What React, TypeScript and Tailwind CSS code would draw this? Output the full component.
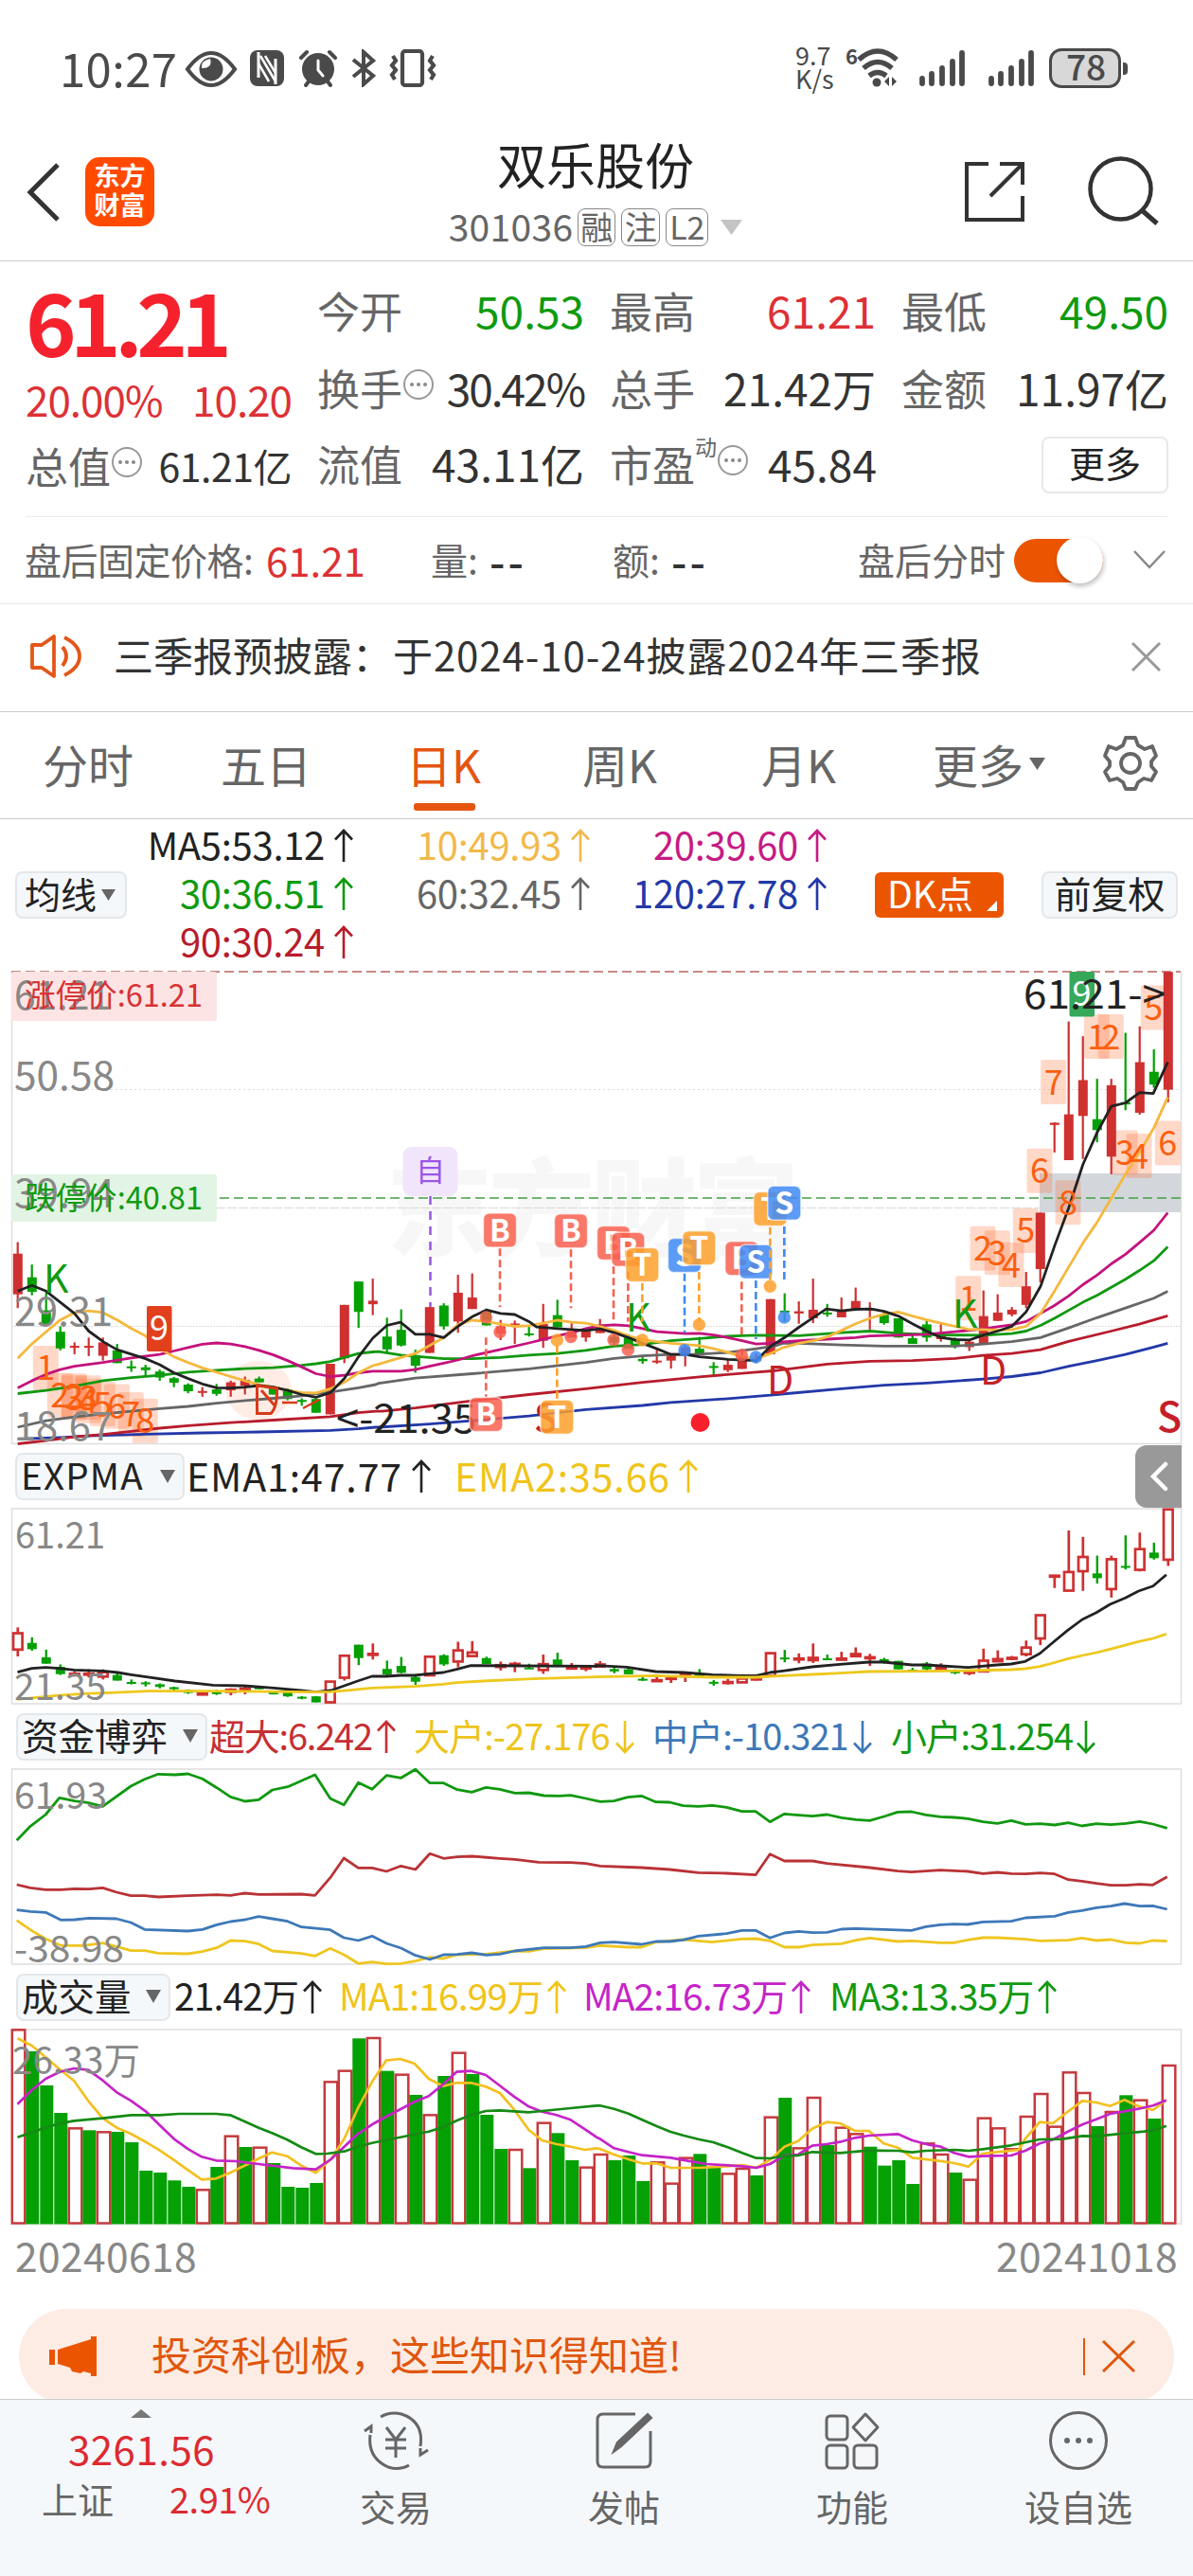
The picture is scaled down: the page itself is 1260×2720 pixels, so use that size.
import React from 'react';

type Pt = [number, number];
type Conv = (p: Pt) => Pt;

const RED = '#cf3030';
const GREEN = '#04a004';

const barX = (i: number) => 18.8 + 15 * i;
const priceY = (v: number) => 1010 + v / 2.958;

const segment = (ox: number, sx: number, oy: number, sy: number): Conv => ([x, y]) => [ox + x / sx, oy + y / sy];
const mainA = segment(0, 3, 1010, 2.958);
const mainB = segment(400, 3, 1010, 2.958);
const mainC = segment(820, 3, 1010, 2.958);
const emaA = segment(0, 2.489, 1520, 3);
const emaB = segment(630, 2.489, 1520, 3);
const fund = segment(0, 1.2444, 1800, 3);
const volA = segment(0, 2.489, 2080, 3);
const volB = segment(630, 2.489, 2080, 3);

const parse = (s: string): Pt[] => s.trim().split(' ').map((p) => p.split(',').map(Number) as Pt);
const join = (parts: [Conv, string][]) =>
  parts.flatMap(([c, s]) => parse(s).map(c)).map(([x, y]) => `${x.toFixed(1)},${y.toFixed(1)}`).join(' ');

const maLines: { color: string; pts: string }[] = [
  {
    color: '#2338a8',
    pts: join([
      [mainA, '56,1507 190,1502 281,1497 461,1492 641,1488 821,1485 1047,1480 1136,1475 1190,1470'],
      [mainB, '0,1470 161,1460 296,1450 476,1435 656,1415 836,1402 926,1393 1106,1381 1241,1370'],
      [mainC, '0,1368 206,1350 341,1339 476,1332 656,1320 746,1312 837,1300 926,1280 1016,1262 1106,1243 1196,1220 1240,1208'],
    ]),
  },
  {
    color: '#b81c2c',
    pts: join([
      [mainA, '56,1522 146,1512 236,1500 326,1493 416,1483 506,1473 596,1465 731,1456 866,1448 1047,1437 1136,1425 1190,1420'],
      [mainB, '10,1420 116,1410 296,1388 476,1368 656,1350 836,1330 1016,1313 1196,1298 1250,1294'],
      [mainC, '0,1293 161,1273 296,1264 431,1262 566,1255 656,1246 746,1240 837,1228 926,1202 1061,1170 1150,1148 1240,1122'],
    ]),
  },
  {
    color: '#666666',
    pts: join([
      [mainA, '56,1470 146,1450 236,1438 326,1428 416,1420 506,1412 596,1405 686,1395 776,1387 866,1380 956,1372 1047,1360 1136,1347 1190,1337'],
      [mainB, '0,1333 116,1317 296,1303 476,1288 656,1268 746,1255 836,1247 926,1243 1016,1242 1106,1237 1196,1225 1260,1215'],
      [mainC, '20,1208 71,1208 206,1213 341,1217 566,1217 656,1210 746,1203 837,1190 926,1160 1016,1128 1106,1098 1196,1067 1240,1046'],
    ]),
  },
  {
    color: '#109810',
    pts: join([
      [mainA, '56,1365 146,1355 236,1342 326,1325 416,1315 506,1308 596,1298 686,1292 776,1287 866,1284 956,1277 1001,1272 1047,1265 1091,1252 1136,1240 1181,1235'],
      [mainB, '0,1234 71,1245 161,1252 206,1256 296,1256 386,1252 476,1245 566,1240 656,1230 746,1217 836,1212 926,1200 1016,1193 1106,1186 1196,1183'],
      [mainC, '71,1184 206,1175 296,1170 386,1177 521,1182 656,1183 746,1178 791,1170 837,1152 881,1130 971,1080 1016,1058 1061,1033 1106,1008 1151,980 1196,950 1240,907'],
    ]),
  },
  {
    color: '#c4127c',
    pts: join([
      [mainA, '56,1347 101,1325 146,1305 191,1290 236,1280 326,1268 416,1254 506,1243 551,1232 596,1221 641,1211 686,1207 731,1210 776,1218 821,1230 866,1244 911,1262 956,1282 1001,1303 1047,1312 1091,1308 1136,1300 1181,1295'],
      [mainB, '0,1295 71,1295 116,1290 161,1280 206,1270 251,1260 296,1247 386,1227 476,1207 566,1185 611,1175 656,1162 701,1153 746,1150 791,1153 836,1162 881,1172 971,1178 1016,1177 1061,1182 1106,1190 1151,1200 1196,1210 1241,1208'],
      [mainC, '20,1204 71,1200 161,1195 251,1190 296,1185 386,1183 476,1180 566,1172 656,1163 701,1156 746,1150 791,1140 837,1115 881,1090 926,1060 971,1025 1016,995 1061,960 1106,930 1151,893 1196,855 1240,800'],
    ]),
  },
  {
    color: '#f5b83d',
    pts: join([
      [mainA, '56,1255 101,1210 146,1172 191,1135 236,1112 281,1107 326,1112 371,1135 416,1162 461,1185 506,1225 551,1250 596,1268 641,1285 686,1298 731,1312 776,1325 821,1338 866,1345 911,1355 956,1362 1001,1363 1047,1350 1091,1330 1136,1300 1181,1278'],
      [mainB, '0,1273 71,1252 116,1240 161,1215 206,1190 251,1150 296,1136 341,1140 386,1148 431,1155 476,1153 521,1145 566,1136 611,1142 656,1145 701,1155 746,1168 791,1185 836,1197 881,1203 926,1208 971,1212 1016,1215 1061,1225 1106,1236 1151,1250 1196,1257 1241,1240'],
      [mainC, '20,1222 71,1208 116,1200 161,1188 206,1168 251,1147 296,1130 341,1117 386,1110 431,1123 476,1135 521,1145 566,1155 611,1165 656,1165 701,1167 746,1165 791,1155 837,1115 881,1045 926,970 971,895 1016,830 1061,755 1106,680 1151,610 1196,535 1240,440'],
    ]),
  },
  {
    color: '#222222',
    pts: join([
      [mainA, '56,1045 101,1027 146,1045 191,1080 236,1115 281,1170 330,1205 371,1228 416,1242 461,1256 506,1275 551,1300 596,1318 641,1335 686,1347 731,1348 776,1345 821,1340 866,1345 911,1355 956,1368 1001,1377 1047,1362 1091,1318 1136,1250 1181,1192'],
      [mainB, '26,1152 69,1142 116,1180 161,1180 206,1190 251,1155 296,1125 341,1104 386,1115 431,1118 476,1140 500,1157 566,1162 656,1168 701,1163 746,1175 791,1190 836,1208 881,1225 926,1243 971,1243 1016,1250 1106,1258 1196,1262 1241,1218'],
      [mainC, '26,1190 71,1158 116,1128 158,1101 206,1107 251,1102 300,1101 341,1108 386,1123 431,1147 476,1170 521,1190 566,1196 611,1198 656,1182 701,1170 746,1155 791,1110 837,1030 881,905 926,785 971,650 1016,550 1061,468 1106,457 1151,425 1194,428 1240,330'],
    ]),
  },
];

// direction (1 up, 0 down), high, body top, body bottom, low
const candles: number[][] = [
  [1, 892, 928, 1055, 1098], [0, 962, 1002, 1047, 1058], [0, 1050, 1105, 1150, 1150], [0, 1155, 1172, 1224, 1230],
  [1, 1205, 1216, 1222, 1242], [1, 1190, 1216, 1222, 1248], [1, 1190, 1205, 1247, 1262], [0, 1210, 1230, 1270, 1270],
  [0, 1262, 1280, 1286, 1297], [0, 1275, 1283, 1292, 1312], [0, 1290, 1296, 1315, 1325], [0, 1313, 1317, 1331, 1345],
  [0, 1333, 1337, 1358, 1364], [1, 1345, 1357, 1362, 1375], [0, 1335, 1352, 1366, 1372], [1, 1325, 1330, 1355, 1375],
  [1, 1312, 1322, 1340, 1368], [0, 1312, 1318, 1330, 1330], [0, 1345, 1347, 1368, 1368], [0, 1349, 1352, 1382, 1386],
  [0, 1380, 1385, 1391, 1403], [0, 1380, 1382, 1425, 1425], [1, 1272, 1272, 1430, 1430], [1, 1088, 1088, 1255, 1270],
  [0, 1015, 1015, 1110, 1160], [1, 1006, 1075, 1086, 1120], [0, 1128, 1187, 1227, 1238], [0, 1102, 1166, 1215, 1218],
  [0, 1228, 1245, 1278, 1300], [1, 1095, 1095, 1238, 1238], [0, 1083, 1090, 1155, 1165], [1, 994, 1050, 1140, 1175],
  [1, 990, 1065, 1101, 1101], [0, 1100, 1110, 1152, 1152], [1, 1135, 1155, 1178, 1198], [1, 1137, 1146, 1151, 1210],
  [0, 1150, 1177, 1182, 1187], [1, 1085, 1148, 1200, 1222], [0, 1072, 1120, 1158, 1158], [1, 1145, 1170, 1190, 1190],
  [1, 1165, 1168, 1190, 1203], [1, 1132, 1150, 1176, 1176], [0, 1180, 1188, 1205, 1218], [0, 1180, 1190, 1225, 1225],
  [0, 1245, 1257, 1264, 1272], [1, 1228, 1262, 1268, 1272], [1, 1245, 1246, 1262, 1287], [1, 1215, 1220, 1245, 1280],
  [0, 1188, 1225, 1240, 1240], [0, 1267, 1279, 1284, 1307], [1, 1257, 1275, 1292, 1298], [1, 1225, 1250, 1288, 1288],
  [1, 1240, 1250, 1262, 1270], [1, 1070, 1070, 1242, 1242], [0, 1052, 1106, 1112, 1140], [1, 1077, 1108, 1115, 1147],
  [1, 1006, 1103, 1130, 1145], [0, 1085, 1112, 1118, 1125], [1, 1065, 1108, 1127, 1127], [1, 1034, 1076, 1102, 1102],
  [1, 1080, 1099, 1104, 1165], [0, 1108, 1118, 1145, 1150], [0, 1130, 1130, 1190, 1190], [0, 1180, 1192, 1210, 1210],
  [0, 1138, 1149, 1190, 1203], [1, 1147, 1175, 1195, 1203], [0, 1190, 1198, 1218, 1224], [1, 1200, 1203, 1220, 1232],
  [1, 1043, 1123, 1210, 1210], [1, 1055, 1112, 1138, 1138], [1, 1095, 1103, 1118, 1124], [1, 985, 1030, 1088, 1098],
  [1, 800, 800, 976, 1018], [1, 518, 519, 526, 612], [1, 203, 493, 636, 636], [1, 249, 386, 498, 632],
  [0, 382, 508, 542, 580], [1, 382, 402, 625, 680], [0, 238, 455, 462, 480], [1, 218, 330, 488, 494],
  [0, 290, 360, 400, 410], [1, 48, 48, 416, 455],
];

const volumes: [number, number][] = [
  [1, 190], [0, 258], [0, 366], [0, 453], [1, 502], [0, 508], [1, 514], [0, 513], [0, 546], [0, 636], [0, 642], [0, 667],
  [0, 687], [1, 697], [0, 624], [1, 527], [0, 561], [1, 563], [0, 612], [0, 687], [0, 690], [0, 675], [1, 355], [1, 320],
  [0, 217], [1, 216], [0, 320], [1, 332], [0, 396], [1, 460], [0, 336], [1, 263], [0, 330], [0, 459], [0, 567], [1, 570],
  [0, 628], [1, 485], [0, 517], [0, 603], [1, 626], [1, 585], [0, 603], [0, 588], [0, 669], [1, 610], [1, 677], [1, 596],
  [0, 583], [0, 626], [1, 646], [1, 630], [0, 651], [1, 467], [0, 405], [1, 565], [1, 405], [0, 555], [1, 500], [1, 520],
  [0, 560], [0, 620], [0, 603], [0, 678], [1, 550], [1, 585], [0, 642], [1, 665], [1, 470], [1, 502], [1, 568], [1, 465],
  [1, 393], [1, 497], [1, 325], [1, 390], [0, 495], [1, 450], [0, 397], [1, 413], [0, 471], [1, 303],
];

const emaLines = [
  {
    color: '#222222',
    pts: join([
      [emaA, '46,737 84,725 120,722 156,725 195,730 270,733 310,738 345,745 385,752 460,765 560,778 640,780 720,787 790,795 830,800 870,795 905,780 940,765 978,750 1015,750 1052,747 1090,747 1127,742 1165,738 1200,728 1238,716 1568,718'],
      [emaB, '0,716 80,721 155,735 230,738 305,745 380,748 420,748 456,738 490,733 567,720 640,712 716,705 755,705 830,714 865,714 978,722 1052,714 1090,711 1127,703 1165,678 1200,643 1238,605 1277,570 1314,548 1350,522 1390,502 1425,480 1463,464 1498,428'],
    ]),
  },
  {
    color: '#eec81e',
    pts: join([
      [emaA, '46,823 90,818 140,812 220,805 290,802 390,797 560,797 830,800 870,799 920,794 978,787 1090,782 1165,775 1200,770 1270,765 1400,758 1568,752'],
      [emaB, '0,752 155,748 305,753 420,753 490,748 570,744 640,740 716,735 865,734 978,732 1090,729 1127,726 1165,719 1200,708 1238,695 1277,684 1314,675 1350,664 1425,640 1463,630 1498,616'],
    ]),
  },
];

const fundLines = [
  {
    color: '#109810',
    pts: join([[fund, '22,430 40,385 60,348 78,295 98,305 115,310 135,322 172,258 190,236 208,220 230,222 247,219 266,235 285,263 303,292 322,306 340,301 358,270 378,260 414,222 434,297 452,317 471,247 489,268 508,224 527,232 546,205 565,248 583,248 601,269 620,277 639,262 657,268 677,280 695,279 715,288 735,289 750,287 770,297 789,307 807,305 825,293 843,289 862,308 880,309 898,320 918,322 936,319 955,325 975,338 993,338 1012,371 1031,346 1050,350 1068,353 1087,348 1106,358 1125,364 1143,367 1162,354 1180,340 1198,339 1217,349 1236,355 1254,357 1272,361 1292,371 1311,376 1329,367 1348,379 1367,377 1386,381 1404,374 1422,384 1441,377 1460,380 1480,376 1498,370 1515,378 1534,391']]),
  },
  {
    color: '#b93236',
    pts: join([[fund, '22,570 40,580 60,586 80,586 98,583 117,584 135,580 153,594 172,605 190,605 208,609 247,605 285,602 303,604 322,597 340,601 396,600 414,604 434,548 452,486 471,517 489,517 508,528 527,511 546,522 565,472 583,487 601,482 620,480 657,487 677,490 708,499 750,500 770,503 789,511 843,516 880,522 918,532 955,534 993,539 1012,473 1031,495 1068,495 1087,503 1143,516 1180,527 1198,530 1236,524 1272,528 1292,535 1311,531 1329,535 1348,536 1367,533 1386,536 1404,554 1422,559 1441,566 1460,572 1480,572 1498,569 1515,571 1534,545']]),
  },
  {
    color: '#eec620',
    pts: join([[fund, '22,683 40,713 60,742 80,763 110,763 135,755 153,766 172,779 190,779 208,787 247,789 266,782 285,770 303,747 322,749 340,758 358,780 396,788 414,796 434,772 452,792 471,820 489,815 508,821 527,820 546,812 565,800 583,804 601,792 639,790 677,780 695,781 715,773 770,770 789,763 825,768 843,768 862,752 898,744 936,752 975,742 993,741 1012,748 1031,768 1050,768 1068,761 1106,757 1125,746 1143,739 1180,750 1198,748 1236,754 1254,754 1272,745 1292,738 1311,738 1348,743 1367,748 1404,746 1422,739 1441,747 1460,744 1480,754 1498,756 1515,747 1534,749']]),
  },
  {
    color: '#3d78b8',
    pts: join([[fund, '22,650 40,655 60,658 80,682 98,681 117,676 153,678 172,690 190,712 247,717 266,712 285,697 303,687 322,681 340,671 358,678 378,686 396,704 434,713 452,738 471,747 489,733 508,756 527,771 546,794 565,807 583,792 601,791 620,786 639,793 657,790 677,780 715,770 750,770 770,766 789,754 807,752 843,759 862,750 880,750 898,745 918,733 955,725 975,715 993,715 1012,739 1031,723 1050,718 1068,722 1087,721 1106,711 1125,709 1198,715 1217,703 1236,697 1254,695 1272,696 1292,688 1329,686 1348,675 1386,670 1404,658 1422,652 1441,643 1460,638 1478,630 1498,638 1515,637 1534,648']]),
  },
];

const volumeLines = [
  {
    color: '#f3c020',
    pts: join([
      [volA, '46,217 84,240 120,277 157,315 195,352 232,415 270,470 307,500 345,520 383,545 420,572 457,602 495,635 530,664 568,661 605,643 643,620 680,598 715,578 755,590 792,620 830,643 870,600 905,535 940,440 978,355 1015,287 1052,282 1090,297 1127,345 1165,368 1200,358 1238,358 1277,370 1314,390 1350,440 1390,507 1425,540 1463,552 1500,560 1538,570 1568,565'],
      [volB, '9,567 46,585 84,600 120,613 158,613 195,627 270,627 345,622 383,618 420,627 456,602 494,560 530,542 567,503 605,482 640,486 680,510 716,510 755,550 792,563 830,595 900,605 940,612 978,623 1015,582 1052,577 1110,570 1127,535 1165,482 1200,486 1238,450 1277,415 1314,420 1350,431 1388,412 1425,432 1463,444 1498,412'],
    ]),
  },
  {
    color: '#c524c8',
    pts: join([
      [volA, '46,425 84,380 120,345 157,323 195,312 232,317 270,350 307,388 345,415 383,448 420,492 457,535 495,568 530,592 568,604 620,606 700,618 770,628 830,632 870,600 905,560 940,520 978,490 1015,465 1052,442 1090,418 1127,400 1165,362 1200,323 1238,320 1277,333 1314,367 1350,400 1390,433 1425,449 1463,460 1500,475 1538,505 1568,530'],
      [volB, '9,535 46,565 84,577 120,587 195,595 240,605 290,615 383,622 420,627 456,615 494,588 530,585 567,557 605,552 640,545 680,532 716,525 792,520 830,540 870,553 905,560 940,580 978,592 1015,590 1090,588 1127,573 1165,550 1200,538 1238,513 1277,490 1314,473 1350,456 1388,448 1425,440 1463,430 1498,413'],
    ]),
  },
  {
    color: '#158a15',
    pts: join([
      [volA, '46,530 100,508 150,488 195,478 270,470 345,460 420,460 470,456 568,456 605,460 643,480 680,500 715,517 755,538 792,562 830,583 860,582 905,575 940,560 978,548 1052,530 1127,512 1165,498 1200,478 1238,460 1277,447 1314,445 1390,451 1425,447 1500,438 1568,430'],
      [volB, '9,430 46,440 84,455 120,475 158,495 195,513 230,525 270,537 307,546 345,562 383,580 420,596 456,597 494,590 530,588 567,577 640,580 716,572 792,573 830,578 865,573 940,570 978,573 1015,568 1090,556 1165,537 1225,536 1277,526 1314,527 1388,518 1440,512 1475,505 1498,494'],
    ]),
  },
];

function Lines({ data, width = 2.8 }: { data: { color: string; pts: string }[]; width?: number }) {
  return (
    <>
      {data.map((l, i) => (
        <polyline key={i} points={l.pts} fill="none" stroke={l.color} strokeWidth={width} strokeLinejoin="round" />
      ))}
    </>
  );
}

function Label({ x, y, w, size, fill = '#888888', children, weight }: { x: number; y: number; w: number; size: number; fill?: string; weight?: number; children: string }) {
  return (
    <text x={x} y={y} fontSize={size} fill={fill} textLength={w} lengthAdjust="spacingAndGlyphs" fontWeight={weight}>
      {children}
    </text>
  );
}

const countMarks: [Conv, number, number, string][] = [
  [mainA, 145, 1285, '1'], [mainA, 190, 1370, '2'], [mainA, 235, 1378, '3'], [mainA, 235, 1372, '2'], [mainA, 280, 1378, '3'],
  [mainA, 280, 1388, '4'], [mainA, 325, 1398, '5'], [mainA, 370, 1405, '6'], [mainA, 415, 1430, '7'], [mainA, 460, 1450, '8'],
  [mainC, 608, 1067, '1'], [mainC, 654, 912, '2'], [mainC, 700, 925, '3'], [mainC, 744, 963, '4'], [mainC, 790, 856, '5'],
  [mainC, 834, 669, '6'], [mainC, 878, 392, '7'], [mainC, 924, 768, '8'], [mainC, 1015, 250, '1'], [mainC, 1060, 250, '2'],
  [mainC, 1104, 612, '3'], [mainC, 1149, 623, '4'], [mainC, 1195, 160, '5'], [mainC, 1240, 583, '6'],
];

const tradeColor: Record<string, string> = { B: '#f8604f', T: '#fda02c', S: '#3f8af5' };

// letter, x, badge y, dash start, dash end, dot y
const trades: [string, number, number, number, number, number][] = [
  ['B', 384, 855, 912, 1095, 1173], ['B', 609, 857, 915, 1098, 1188], ['B', 744, 895, 968, 1140, 1197],
  ['B', 790, 915, 985, 1140, 1228], ['T', 835, 963, 1020, 1140, 1198], ['S', 969, 933, 990, 1175, 1230],
  ['T', 1015, 910, 985, 1140, 1150], ['B', 1150, 943, 1015, 1180, 1245], ['S', 1195, 953, 1012, 1195, 1251],
  ['T', 1240, 788, 845, 1010, 1030], ['S', 1285, 770, 843, 1012, 1127], ['B', 340, 1430, 1190, 1375, 1127],
  ['T', 565, 1438, 1215, 1382, 1198],
];

function Dashed({ y, color, x = 12 }: { y: number; color: string; x?: number }) {
  return <line x1={x} x2={1247} y1={y} y2={y} stroke={color} strokeWidth={1.4} strokeDasharray="10 5" />;
}

function MainChart() {
  return (
    <svg className="block h-[506px] w-full" viewBox="0 1020 1260 506">
      <g fontWeight={900} fontSize={112} fill="#f7f7f8">
        <text x={408} y={1318} textLength={436}>东方财富</text>
      </g>
      <path d="M12.5 1026V1524.5H1247.5V1026" fill="none" stroke="#dedede" strokeWidth={1.5} />
      <line x1={12} x2={1247} y1={1150.5} y2={1150.5} stroke="#dddddd" strokeDasharray="2 3" />
      <line x1={12} x2={1247} y1={1275.5} y2={1275.5} stroke="#d8d8d8" strokeDasharray="10 2" />
      <line x1={12} x2={1247} y1={1400.5} y2={1400.5} stroke="#dddddd" strokeDasharray="2 1" />
      <rect x={1098} y={1239} width={149} height={41} fill="#d3d7dc" />
      <Dashed y={1026} color="#b5645c" />
      <Dashed y={1265} color="#43a043" x={232} />
      {countMarks.map(([c, x, y], i) => {
        const [cx, cy] = c([x, y]);
        return <rect key={i} x={cx - 13.5} y={cy - 23.5} width={27} height={47} rx={2} fill="#ff6a2b" fillOpacity={0.26} />;
      })}
      <ellipse cx={273} cy={1468} rx={35} ry={31} fill="#ff6a2b" fillOpacity={0.12} />
      {candles.map(([up, h, t, b, l], i) => {
        const color = up ? RED : GREEN;
        return (
          <g key={i} fill={color}>
            <rect x={barX(i) - 1.2} y={priceY(h)} width={2.2} height={priceY(l) - priceY(h)} />
            <rect x={barX(i) - 5} y={priceY(t)} width={10} height={Math.max(2, priceY(b) - priceY(t))} />
          </g>
        );
      })}
      <Lines data={maLines} />
      <g textAnchor="middle" fontSize={36} fill="#fb5f10">
        {countMarks.map(([c, x, y, n], i) => {
          const [cx, cy] = c([x, y]);
          return <text key={i} x={cx} y={cy + 13}>{n}</text>;
        })}
      </g>
      <g textAnchor="middle" fontSize={36} fill="#ffffff">
        <rect x={155} y={1379} width={26.5} height={48} rx={2} fill="#e2401c" />
        <text x={168} y={1415}>9</text>
        <rect x={1129.5} y={1026} width={26.5} height={47.5} rx={2} fill="#35a85a" />
        <text x={1142.5} y={1062}>9</text>
      </g>
      <rect x={12} y={1026} width={217} height={52} rx={3} fill="#fde4e4" />
      <rect x={12} y={1240} width={217} height={50} rx={3} fill="#e2f4e3" />
      <Label x={15} y={1066} w={102} size={42}>61.21</Label>
      <Label x={15} y={1151} w={106} size={42}>50.58</Label>
      <Label x={15} y={1275} w={106} size={42}>39.94</Label>
      <Label x={15} y={1400} w={104} size={42}>29.31</Label>
      <Label x={15} y={1520.5} w={104} size={42}>18.67</Label>
      <Label x={26} y={1063} w={188} size={33} fill="#d83232">涨停价:61.21</Label>
      <Label x={26} y={1277} w={188} size={33} fill="#119a11">跌停价:40.81</Label>
      <g fontSize={41}>
        <text x={46} y={1364.5} fill="#119a11">K</text>
        <text x={661} y={1406} fill="#119a11">K</text>
        <text x={1006} y={1402} fill="#119a11">K</text>
        <text x={810} y={1472} fill="#c4202a">D</text>
        <text x={1035} y={1462} fill="#c4202a">D</text>
        <text x={1222} y={1512} fill="#c4202a" fontWeight={500} fontSize={43}>S</text>
        <text x={564} y={1512} fill="#c4202a" fontWeight={500}>S</text>
      </g>
      <g fill="none" stroke="#d93a1a" strokeWidth={3}>
        <path d="M271.500 1463V1492.500H286Q293 1486 292.500 1466ZM276 1468L290 1484" />
        <path d="M298 1481H314M320 1487L337 1478" strokeWidth={2.5} />
      </g>
      <Label x={355} y={1513} w={148} size={42} fill="#222222">&lt;-21.35</Label>
      <Label x={1081} y={1065} w={150} size={42} fill="#222222">61.21-&gt;</Label>
      <circle cx={739.5} cy={1502} r={10} fill="#f8202a" />
      <rect x={425.500} y={1211} width={58} height={52} rx={9} fill="#efe2fc" fillOpacity={0.9} />
      <text x={454.500} y={1247} textAnchor="middle" fontSize={31} fill="#9c55e6">自</text>
      <line x1={454.5} x2={454.5} y1={1263} y2={1380} stroke="#9b5be0" strokeWidth={2.6} strokeDasharray="9 7" />
      {trades.map(([t, x, by, d1, d2, dot], i) => {
        const bx = 400 + x / 3;
        const y = priceY(by);
        const color = tradeColor[t];
        return (
          <g key={i}>
            <line x1={bx} x2={bx} y1={priceY(d1)} y2={priceY(d2)} stroke={color} strokeWidth={2.6} strokeDasharray="8 4" />
            <circle cx={bx} cy={priceY(dot)} r={6.7} fill={color} fillOpacity={0.85} />
            <rect x={bx - 17.5} y={y - 18} width={35} height={36} rx={6} fill={color} fillOpacity={0.85} stroke="#ffffff" strokeOpacity={0.6} strokeWidth={1.5} />
            <text x={bx} y={y + 11.5} textAnchor="middle" fontSize={32} fontWeight={700} fill="#ffffff">{t}</text>
          </g>
        );
      })}
    </svg>
  );
}

function EmaChart() {
  const y = (v: number) => 1593 + ((v - 48) / 1380) * 205;
  return (
    <svg className="block h-[208px] w-full" viewBox="0 1592 1260 208">
      <rect x={12.5} y={1593} width={1235} height={206} fill="none" stroke="#dedede" strokeWidth={1.5} />
      {candles.map(([up, h, t, b, l], i) => {
        const x = barX(i);
        const bh = Math.max(2, y(b) - y(t));
        if (!up) {
          return (
            <g key={i} fill={GREEN}>
              <rect x={x - 1.2} y={y(h)} width={2.4} height={y(l) - y(h)} />
              <rect x={x - 5} y={y(t)} width={10} height={bh} />
            </g>
          );
        }
        return (
          <g key={i} stroke={RED} strokeWidth={2.7}>
            <line x1={x} x2={x} y1={y(h)} y2={y(t)} />
            <line x1={x} x2={x} y1={y(b)} y2={y(l)} />
            <rect x={x - 4.8} y={y(t) + 0.8} width={9.6} height={Math.max(1, bh - 1.6)} fill={bh > 4 ? '#ffffff' : RED} />
          </g>
        );
      })}
      <Lines data={emaLines} />
      <Label x={16} y={1635} w={95} size={39}>61.21</Label>
      <Label x={15} y={1795} w={97} size={39}>21.35</Label>
    </svg>
  );
}

function FundChart() {
  return (
    <svg className="block h-[208px] w-full" viewBox="0 1867 1260 208">
      <rect x={12.5} y={1868} width={1235} height={206} fill="none" stroke="#dedede" strokeWidth={1.5} />
      <Lines data={fundLines} />
      <Label x={15} y={1910} w={98} size={39}>61.93</Label>
      <Label x={15} y={2072} w={116} size={39}>-38.98</Label>
    </svg>
  );
}

function VolumeChart() {
  return (
    <svg className="block h-[208px] w-full" viewBox="0 2142 1260 208">
      <rect x={12.5} y={2143} width={1235} height={205} fill="none" stroke="#dedede" strokeWidth={1.5} />
      {volumes.map(([up, v], i) => {
        const top = 2080 + v / 3;
        const x = barX(i);
        return up ? (
          <rect key={i} x={x - 6} y={top} width={13.5} height={2347.5 - top} fill="#ffffff" stroke="#c53a3e" strokeWidth={2.5} />
        ) : (
          <rect key={i} x={x - 6.500} y={top} width={14} height={2348.5 - top} fill={GREEN} />
        );
      })}
      <Lines data={volumeLines} width={2.7} />
      <Label x={13} y={2190} w={135} size={39}>26.33万</Label>
    </svg>
  );
}

function Arrow({ down, className = '' }: { down?: boolean; className?: string }) {
  return (
    <svg className={`h-[36px] w-[22px] shrink-0 ${className}`} viewBox="0 0 22 36" fill="none" stroke="currentColor" strokeWidth={2.6}>
      {down ? <path d="M11 1V34M2 24.500L11 34L20 24.500" /> : <path d="M11 35V2M2 11.500L11 2L20 11.500" />}
    </svg>
  );
}

function Tri({ className = '' }: { className?: string }) {
  return (
    <svg className={`shrink-0 ${className}`} viewBox="0 0 16 14" preserveAspectRatio="none" fill="currentColor">
      <path d="M0 0H16L8 14Z" />
    </svg>
  );
}

function Dots() {
  return (
    <svg className="mb-[6px] h-[34px] w-[34px] shrink-0" viewBox="0 0 34 34" fill="none" stroke="#999999" strokeWidth={2}>
      <circle cx={17} cy={17} r={15} />
      <g fill="#888888" stroke="none"><circle cx={10} cy={17} r={2} /><circle cx={17} cy={17} r={2} /><circle cx={24} cy={17} r={2} /></g>
    </svg>
  );
}

function Cell({ label, value, tone = 'text-[#333333]', h, icon, track = '' }: { label: string; value: string; tone?: string; h: string; icon?: boolean; track?: string }) {
  return (
    <div className={`flex items-center justify-between ${h}`}>
      <span className="-ml-[2px] flex items-center text-[45px] text-[#666666]">
        {label}
        {icon && <Dots />}
      </span>
      <span className={`text-[46px] ${tone} ${track}`}>{value}</span>
    </div>
  );
}

function Signal() {
  return (
    <svg className="h-[40px] w-[50px]" viewBox="0 0 50 40" stroke="#4a4a4a" strokeWidth={5.8} strokeLinecap="round">
      <path d="M4 31V36M14 26V36M25 20V36M36 13V36M46 4V36" />
    </svg>
  );
}

function StatusBar() {
  return (
    <div className="flex h-[140px] items-center pl-[63px] text-[#4a4a4a]">
      <span className="w-[129px] text-[49px] tracking-[0.4px]">10:27</span>
      <svg className="ml-[3px] mt-[5px] h-[40px] w-[56px]" viewBox="0 0 56 40" fill="none" stroke="#4a4a4a" strokeWidth={4}>
        <path d="M3 20Q28 -14 53 20Q28 54 3 20Z" />
        <circle cx={28} cy={20} r={12.500} fill="#4a4a4a" stroke="none" />
        <path d="M27 9Q30 19 18 19Q17 11 27 9Z" fill="#ffffff" stroke="none" />
      </svg>
      <svg className="ml-[13px] mt-[4px] h-[38px] w-[36px]" viewBox="0 0 36 38">
        <rect width={36} height={38} rx={8} fill="#4a4a4a" />
        <path d="M9 2V29M27 36V9" stroke="#ffffff" strokeWidth={3} />
        <path d="M11 6L27 33M9 14L20 33M16 6L27 24" stroke="#ffffff" strokeWidth={2.500} fill="none" />
      </svg>
      <svg className="ml-[15px] mt-[4px] h-[40px] w-[42px]" viewBox="0 0 42 40" stroke="#4a4a4a" strokeWidth={4} strokeLinecap="round">
        <circle cx={21} cy={21} r={17} fill="#4a4a4a" stroke="none" />
        <path d="M3 9L9 3M39 9L33 3M8 38L11 34M34 38L31 34" />
        <path d="M21 12V22L26 28" stroke="#ffffff" strokeWidth={3} fill="none" />
      </svg>
      <svg className="ml-[14px] mt-[4px] h-[40px] w-[26px]" viewBox="0 0 26 40" fill="none" stroke="#4a4a4a" strokeWidth={4}>
        <path d="M2 11L23 28L13 37V3L23 12L2 29" />
      </svg>
      <svg className="ml-[14px] mt-[4px] h-[40px] w-[50px]" viewBox="0 0 50 40" fill="none" stroke="#4a4a4a" strokeWidth={4.2}>
        <rect x={14} y={2} width={21} height={36} rx={3} />
        <path d="M4 7L7 12L3 17L7 22L3 27L6 32M46 7L43 12L47 17L43 22L47 27L44 32" />
      </svg>
      <div className="ml-[379px] flex w-[46px] flex-col text-[27px] leading-[25px]">
        <span>9.7</span>
        <span>K/s</span>
      </div>
      <svg className="ml-[7px] mt-[2px] h-[42px] w-[58px]" viewBox="0 0 58 42" fill="none" stroke="#4a4a4a" strokeWidth={5.5}>
        <path d="M14 13Q34 -5 54 13M19 22Q34 9 49 22M25 30Q34 23 43 30" />
        <circle cx={33} cy={37} r={4.500} fill="#4a4a4a" stroke="none" />
        <path d="M41 36L46 31V41ZM54 36L49 31V41Z" fill="#4a4a4a" stroke="none" />
        <text x={0} y={18} fontSize={22} fontWeight={700} fill="#4a4a4a" stroke="none">6</text>
      </svg>
      <span className="ml-[19px] mt-[3px]"><Signal /></span>
      <span className="ml-[23px] mt-[3px]"><Signal /></span>
      <div className="ml-[15px] mt-[4px] flex h-[42px] w-[76px] items-center justify-center rounded-[13px] border-[3px] border-[#4a4a4a] bg-[#d8d8d8] pb-[5px] pl-[2px] text-[37px] font-medium leading-none">78</div>
      <span className="ml-[2px] mt-[4px] h-[13px] w-[5px] rounded-r-[4px] bg-[#4a4a4a]" />
    </div>
  );
}

function Tag({ children, w }: { children: string; w: string }) {
  return <span className={`flex h-[40px] items-center justify-center rounded-[8px] border-[1.5px] border-[#888888] pb-[3px] text-[34px] leading-none ${w}`}>{children}</span>;
}

function Header() {
  return (
    <div className="flex h-[136px] items-start border-b border-[#cccccc]">
      <svg className="ml-[28px] mt-[32px] h-[62px] w-[36px]" viewBox="0 0 36 62" fill="none" stroke="#333333" strokeWidth={5}><path d="M33 2L4 31L33 60" /></svg>
      <div className="ml-[26px] mt-[26px] flex h-[73px] w-[73px] flex-col items-center justify-center rounded-[15px] bg-[#ff4a00] pb-[5px] text-[27px] font-bold leading-[31px] text-white">
        <span>东方</span>
        <span>财富</span>
      </div>
      <div className="ml-[286px] flex w-[360px] flex-col items-center">
        <div className="mt-[7px] text-[52px] leading-[52px] text-[#222222]">双乐股份</div>
        <div className="mt-[21px] flex h-[40px] items-center text-[#666666]">
          <span className="mr-[5px] pb-[4px] text-[39px] tracking-[0.3px]">301036</span>
          <Tag w="w-[40px]">融</Tag>
          <span className="w-[6px]" />
          <Tag w="w-[41px]">注</Tag>
          <span className="w-[6px]" />
          <Tag w="w-[45px]">L2</Tag>
          <Tri className="ml-[13px] h-[16px] w-[23px] text-[#c4c4c4]" />
        </div>
      </div>
      <svg className="ml-[208px] mt-[29px] h-[67px] w-[67px]" viewBox="0 0 67 67" fill="none" stroke="#333333" strokeWidth={4}>
        <path d="M27 4H4V63H63V38M39 4H63V26M63 4L29 38" />
      </svg>
      <svg className="ml-[65px] mt-[25px] h-[74px] w-[76px]" viewBox="0 0 76 74" fill="none" stroke="#333333" strokeWidth={4.500}>
        <circle cx={34.500} cy={34.500} r={32} /><path d="M57 57L73 71" strokeWidth={5} />
      </svg>
    </div>
  );
}

function Quote() {
  return (
    <div className="flex h-[269px] gap-[29px] pl-[27px] pt-[10px]">
      <div className="w-[281px]">
        <div className="flex h-[102px] items-center text-[91px] font-bold tracking-[-6.6px] text-[#f5222d]">61.21</div>
        <div className="flex h-[66px] items-center justify-between text-[44px] tracking-[-1px] text-[#dd3135]">
          <span>20.00%</span>
          <span>10.20</span>
        </div>
        <div className="flex h-[74px] items-center justify-between">
          <span className="flex items-center text-[45px] text-[#666666]">总值<Dots /></span>
          <span className="text-[41px] tracking-[-0.5px] text-[#333333]">61.21亿</span>
        </div>
      </div>
      <div className="w-[280px]">
        <Cell h="h-[82px]" label="今开" value="50.53" tone="text-[#0f9a0f]" />
        <Cell h="h-[82px]" label="换手" value="30.42%" icon track="tracking-[-2px]" />
        <Cell h="h-[78px]" label="流值" value="43.11亿" />
      </div>
      <div className="w-[279px]">
        <Cell h="h-[82px]" label="最高" value="61.21" tone="text-[#dd3135]" />
        <Cell h="h-[82px]" label="总手" value="21.42万" />
        <div className="-ml-[2px] flex h-[78px] items-center text-[45px] text-[#666666]">
          <span>市盈</span>
          <span className="mb-[36px] text-[23px]">动</span>
          <Dots />
          <span className="ml-[20px] text-[46px] text-[#333333]">45.84</span>
        </div>
      </div>
      <div className="w-[280px]">
        <Cell h="h-[82px]" label="最低" value="49.50" tone="text-[#0f9a0f]" />
        <Cell h="h-[82px]" label="金额" value="11.97亿" />
        <div className="ml-auto mt-[11px] flex h-[60px] w-[134px] items-center justify-center rounded-[8px] border-2 border-[#e8e8e8] pb-[6px] text-[38px] text-[#222222]">更多</div>
      </div>
    </div>
  );
}

function AfterHours() {
  return (
    <div className="flex h-[92px] items-center border-b border-[#e9e9e9] pb-[2px] pl-[26px] text-[39px] text-[#666666]">
      <span className="w-[255px] tracking-[-0.5px]">盘后固定价格:</span>
      <span className="w-[174px] text-[42px] text-[#dd3135]">61.21</span>
      <span className="w-[62px]">量:</span>
      <span className="w-[130px] text-[46px] font-medium tracking-[3px] text-[#333333]">--</span>
      <span className="w-[62px]">额:</span>
      <span className="w-[197px] text-[46px] font-medium tracking-[3px] text-[#333333]">--</span>
      <span className="w-[165px]">盘后分时</span>
      <div className="mt-[3px] flex h-[46px] w-[94px] justify-end rounded-full bg-[#eb5500]">
        <span className="-my-[2px] h-[49px] w-[49px] rounded-full bg-white shadow-[1px_3px_5px_rgba(0,0,0,0.25)]" />
      </div>
      <svg className="ml-[32px] h-[20px] w-[34px]" viewBox="0 0 34 20" fill="none" stroke="#888888" strokeWidth={2.500}><path d="M1 1L17 18L33 1" /></svg>
    </div>
  );
}

function Notice() {
  return (
    <div className="flex h-[114px] items-center border-b border-[#cccccc] pb-[7px] pl-[30px] text-[42px] text-[#333333]">
      <svg className="mt-[4px] h-[48px] w-[58px]" viewBox="0 0 58 48" fill="none" stroke="#e2571a" strokeWidth={3.800} strokeLinejoin="round">
        <path d="M4 12H14L27 3V45L14 36H4ZM27 3V45M36 14Q44 24 36 34M38 4Q54 12 54 24Q54 36 38 44" />
      </svg>
      <span className="ml-[32px] w-[295px]">三季报预披露：</span>
      <span className="w-[780px] tracking-[0.9px]">于2024-10-24披露2024年三季报</span>
      <svg className="mt-[4px] h-[31px] w-[31px]" viewBox="0 0 31 31" stroke="#999999" strokeWidth={3}><path d="M1 1L30 30M30 1L1 30" /></svg>
    </div>
  );
}

function Tabs() {
  return (
    <div className="flex h-[113px] items-center border-b border-[#cccccc] pb-[4px] pl-[45px] text-[48px] text-[#666666]">
      <span className="w-[188px]">分时</span>
      <span className="w-[196px]">五日</span>
      <span className="relative w-[186px] text-[#e55510]">
        日K
        <i className="absolute -bottom-[26px] left-[8px] h-[8px] w-[65px] rounded-[3px] bg-[#e55510]" />
      </span>
      <span className="w-[189px]">周K</span>
      <span className="w-[181px]">月K</span>
      <span className="w-[102px]">更多</span>
      <Tri className="h-[13px] w-[17px]" />
      <svg className="ml-[60px] h-[60px] w-[60px]" viewBox="0 0 60 60" fill="none" stroke="#666666" strokeWidth={3.800} strokeLinejoin="round">
        <path d="M25 3H35L38 11L45 15L53 12L57 22L52 28V33L57 39L52 48L44 46L38 50L35 57H25L22 50L16 46L8 48L3 39L8 33V28L3 22L7 12L15 15L22 11Z" />
        <circle cx={30} cy={30} r={10} />
      </svg>
    </div>
  );
}

function Ma({ children, tone }: { children: string; tone: string }) {
  return (
    <span className={`flex items-center justify-end text-[40px] tracking-[-0.3px] ${tone}`}>
      {children}
      <Arrow className="ml-[9px] mt-[4px]" />
    </span>
  );
}

function MaPanel() {
  return (
    <div className="flex h-[155px] pl-[16px]">
      <div className="mt-[55px] flex h-[50px] w-[118px] items-center rounded-[8px] border-2 border-[#e4e7ea] bg-[#f5f8fa] pb-[5px] pl-[8px] text-[38px] text-[#222222]">
        均线<Tri className="ml-[5px] mt-[4px] h-[12px] w-[15px] text-[#666666]" />
      </div>
      <div className="grid h-[154px] w-[740px] grid-cols-[240px_250px_250px] grid-rows-3">
        <Ma tone="text-[#222222]">MA5:53.12</Ma>
        <Ma tone="text-[#f1b94a]">10:49.93</Ma>
        <Ma tone="text-[#c71a84]">20:39.60</Ma>
        <Ma tone="text-[#109a10]">30:36.51</Ma>
        <Ma tone="text-[#666666]">60:32.45</Ma>
        <Ma tone="text-[#2338a8]">120:27.78</Ma>
        <Ma tone="text-[#b81c2c]">90:30.24</Ma>
      </div>
      <div className="relative ml-[50px] mt-[56px] flex h-[48px] w-[136px] items-center rounded-[6px] bg-[#eb5500] pb-[5px] pl-[13px] text-[39px] text-white">
        DK点
        <svg className="absolute bottom-[7px] right-[7px] h-[11px] w-[11px]" viewBox="0 0 11 11" fill="#ffffff"><path d="M11 0V11H0Z" /></svg>
      </div>
      <div className="ml-[40px] mt-[55px] flex h-[50px] w-[144px] items-center justify-center rounded-[8px] border-2 border-[#e4e7ea] bg-[#f5f8fa] pb-[5px] text-[39px] text-[#222222]">前复权</div>
    </div>
  );
}

function Selector({ children, w, track = '' }: { children: string; w: string; track?: string }) {
  return (
    <div className={`flex h-[50px] shrink-0 items-center justify-between rounded-[8px] border-2 border-[#e4e7ea] bg-[#f5f8fa] pb-[5px] pl-[4px] pr-[8px] text-[38.5px] text-[#222222] ${w} ${track}`}>
      {children}
      <Tri className="mt-[4px] h-[14px] w-[16px] text-[#666666]" />
    </div>
  );
}

function Stat({ children, tone, w, down, size, gap }: { children: string; tone: string; w: string; down?: boolean; size: string; gap: string }) {
  return (
    <span className={`flex shrink-0 items-center pb-[4px] ${w} ${size} ${tone}`}>
      {children}
      <Arrow down={down} className={`mt-[4px] ${gap}`} />
    </span>
  );
}

function BottomItem({ label, children, w }: { label: string; children: React.ReactNode; w: string }) {
  return (
    <div className={`flex flex-col items-center pt-[11px] ${w}`}>
      <svg className="h-[64px] w-[72px]" viewBox="0 0 72 64" fill="none" stroke="#666666" strokeWidth={3}>{children}</svg>
      <span className="mt-[18px] text-[38px] leading-[38px] text-[#666666]">{label}</span>
    </div>
  );
}

export default function App() {
  return (
    <div
      className="h-[2720px] w-[1260px] overflow-hidden whitespace-nowrap bg-white leading-none"
      style={{ fontFamily: '"Noto Sans CJK SC", "Noto Sans", sans-serif' }}
    >
      <StatusBar />
      <Header />
      <Quote />
      <div className="mx-[27px] h-px bg-[#ececec]" />
      <AfterHours />
      <Notice />
      <Tabs />
      <MaPanel />
      <MainChart />
      <div className="flex h-[66px] items-center pl-[16px]">
        <Selector w="w-[179px]" track="tracking-[1.2px]">EXPMA</Selector>
        <span className="w-[2px]" />
        <Stat size="text-[41px] tracking-[0.9px]" gap="ml-[9px]" w="w-[283px]" tone="text-[#222222]">EMA1:47.77</Stat>
        <Stat size="text-[41px] tracking-[0.9px]" gap="ml-[8px]" w="w-[280px]" tone="text-[#f0c419]">EMA2:35.66</Stat>
        <div className="ml-auto mr-[12px] flex h-[66px] w-[49px] items-center justify-center rounded-l-[12px] bg-[#999999]">
          <svg className="h-[32px] w-[20px]" viewBox="0 0 20 32" fill="none" stroke="#ffffff" strokeWidth={4.500} strokeLinecap="round"><path d="M17 3L4 16L17 29" /></svg>
        </div>
      </div>
      <EmaChart />
      <div className="flex h-[67px] items-center pl-[17px]">
        <Selector w="w-[202px]">资金博弈</Selector>
        <span className="w-[2px]" />
        <Stat size="text-[38px] tracking-[-1.2px]" gap="ml-[4px]" w="w-[216px]" tone="text-[#c62f33]">超大:6.242</Stat>
        <Stat size="text-[38px] tracking-[-0.9px]" gap="ml-[5px]" w="w-[252px]" tone="text-[#eec41c]" down>大户:-27.176</Stat>
        <Stat size="text-[38px] tracking-[-0.9px]" gap="ml-[4px]" w="w-[252px]" tone="text-[#3d78b8]" down>中户:-10.321</Stat>
        <Stat size="text-[38px] tracking-[-1.2px]" gap="ml-[3px]" w="w-[252px]" tone="text-[#109a10]" down>小户:31.254</Stat>
      </div>
      <FundChart />
      <div className="flex h-[67px] items-center pl-[17px]">
        <Selector w="w-[163px]">成交量</Selector>
        <span className="w-[4px]" />
        <Stat size="text-[39px] tracking-[-0.9px]" gap="ml-[4px]" w="w-[174px]" tone="text-[#222222]">21.42万</Stat>
        <Stat size="text-[39px] tracking-[-0.9px]" gap="ml-[4px]" w="w-[258px]" tone="text-[#f0c419]">MA1:16.99万</Stat>
        <Stat size="text-[39px] tracking-[-0.9px]" gap="ml-[4px]" w="w-[260px]" tone="text-[#c524c8]">MA2:16.73万</Stat>
        <Stat size="text-[39px] tracking-[-0.9px]" gap="ml-[4px]" w="w-[260px]" tone="text-[#109a10]">MA3:13.35万</Stat>
      </div>
      <VolumeChart />
      <div className="flex h-[62px] items-center justify-between pl-[16px] pr-[16px] text-[42.5px] tracking-[0.4px] text-[#888888]">
        <span>20240618</span>
        <span>20241018</span>
      </div>
      <div className="h-[121px] overflow-hidden px-[20px] pt-[26px]">
        <div className="flex h-[100px] items-center rounded-[50px] bg-[#fcece3] text-[42px] text-[#e0560d]">
          <svg className="ml-[32px] h-[42px] w-[50px]" viewBox="0 0 50 42" fill="#eb5500">
            <path d="M0 14H6V30H0ZM9 14L44 3V0H50V42H44V39L36 37L33 39L24 37L22 33L9 29Z" />
          </svg>
          <span className="ml-[58px] w-[984px] pb-[7px]">投资科创板，这些知识得知道!</span>
          <span className="h-[39px] w-[1.500px] bg-[#e0560d]" />
          <svg className="ml-[18px] h-[34px] w-[35px]" viewBox="0 0 35 34" stroke="#e0560d" strokeWidth={3}><path d="M1 1L34 33M34 1L1 33" /></svg>
        </div>
      </div>
      <div className="flex h-[187px] border-t border-[#cccccc] bg-[#f5f8fb]">
        <div className="w-[300px] text-[#dd2a30]">
          <svg className="ml-[138px] mt-[10px] h-[9px] w-[22px]" viewBox="0 0 22 9" fill="#777777"><path d="M0 9L11 0L22 9Z" /></svg>
          <div className="mt-[11px] pl-[72px] text-[42px] leading-[42px] tracking-[0.5px]">3261.56</div>
          <div className="mt-[12px] flex h-[40px] items-center pl-[44px] text-[38px]">
            <span className="w-[135px] text-[#666666]">上证</span>
            <span className="tracking-[-0.5px]">2.91%</span>
          </div>
        </div>
        <BottomItem label="交易" w="w-[236px]">
          <path d="M20 7Q30 1 42 4Q66 12 62 38M50 58Q40 64 28 60Q6 50 9 26M3 22L10 17V24M70 42L62 47V40" />
          <path d="M26 18L36 31L46 18M36 31V50M25 31H47M25 40H47" />
        </BottomItem>
        <BottomItem label="发帖" w="w-[246px]">
          <path d="M48 4H14Q8 4 8 10V54Q8 60 14 60H58Q64 60 64 54V22" />
          <path d="M61 6L63 8L32 37L28 40L30 35Z" strokeWidth={5} />
        </BottomItem>
        <BottomItem label="功能" w="w-[236px]">
          <rect x={9} y={6} width={22} height={25} rx={4} /><rect x={9} y={37} width={22} height={24} rx={4} /><rect x={38} y={37} width={24} height={24} rx={4} />
          <path d="M50 4L63 18L50 32L37 18Z" strokeLinejoin="round" />
        </BottomItem>
        <BottomItem label="设自选" w="w-[242px]">
          <circle cx={36} cy={32} r={29.500} />
          <g fill="#666666" stroke="none"><circle cx={24} cy={32} r={3} /><circle cx={36} cy={32} r={3} /><circle cx={48} cy={32} r={3} /></g>
        </BottomItem>
      </div>
    </div>
  );
}
